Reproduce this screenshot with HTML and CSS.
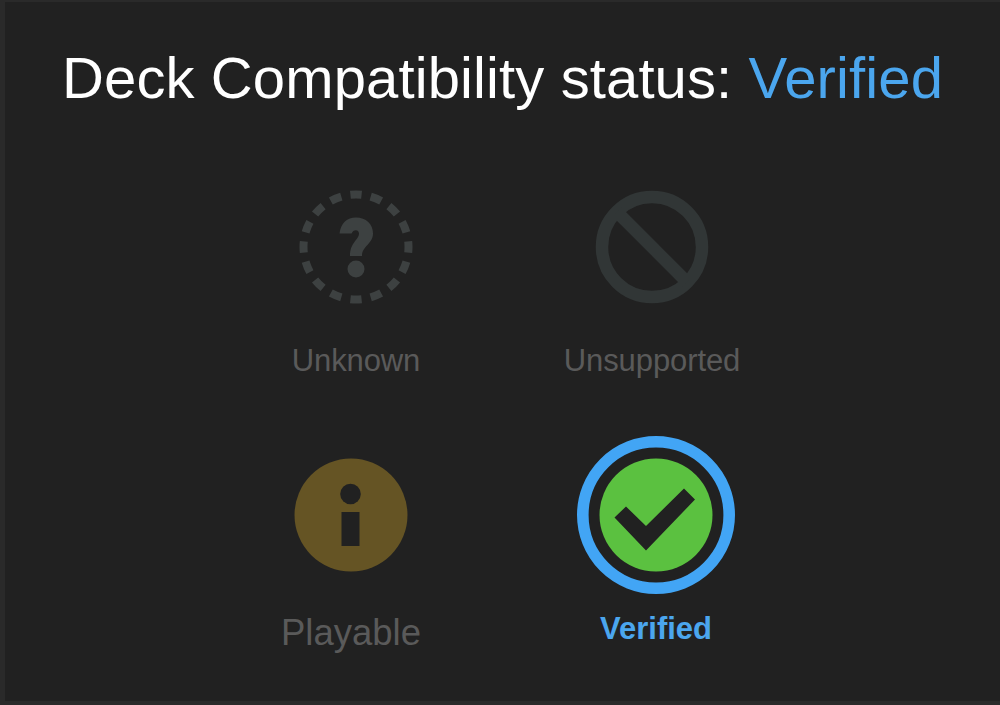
FILE: index.html
```
<!DOCTYPE html>
<html lang="en">
<head>
    <meta charset="UTF-8">
    <meta name="viewport" content="width=device-width, initial-scale=1.0">
    <title>Deck Compatibility</title>
    <link rel="stylesheet" href="styles.css">
</head>
<body>
    <div class="panel">
        <h1>Deck Compatibility status: <span class="current">Verified</span></h1>

        <div class="statuses">
            <div class="status unknown">
                <svg class="icon" width="114" height="114" viewBox="0 0 114 114">
                    <!-- 16 dashes, the first one centred on the right -->
                    <circle cx="57" cy="57" r="52.5" pathLength="320" fill="none" stroke="#3d4141" stroke-width="8" stroke-dasharray="11 9" stroke-dashoffset="5.5"/>
                    <path d="M40.500 43.500C42 33 48 27.500 57 27.500C67 27.500 74 34 74 43.500C74 54 63 56 63 66H51C51 52 60 50 60 43.500C60 39 54 39 52.500 43.500Z" fill="#3d4141"/>
                    <circle cx="57" cy="79" r="8.5" fill="#3d4141"/>
                </svg>
                <p>Unknown</p>
            </div>

            <div class="status unsupported">
                <svg class="icon" width="114" height="114" viewBox="0 0 114 114">
                    <circle cx="57" cy="57" r="50" fill="none" stroke="#313636" stroke-width="12.5"/>
                    <path d="M22 22L92 92" stroke="#313636" stroke-width="12.5"/>
                </svg>
                <p>Unsupported</p>
            </div>

            <div class="status playable">
                <svg class="icon" width="114" height="114" viewBox="0 0 114 114">
                    <circle cx="57" cy="57" r="56.5" fill="#655424"/>
                    <circle cx="56.5" cy="36" r="10.3" fill="#212121"/>
                    <path d="M47.5 54H65.5V88H47.5Z" fill="#212121"/>
                </svg>
                <p>Playable</p>
            </div>

            <div class="status verified">
                <svg class="icon" width="158" height="158" viewBox="0 0 158 158">
                    <circle cx="79" cy="79" r="73.2" fill="none" stroke="#42a5f5" stroke-width="11.6"/>
                    <circle cx="79" cy="79" r="56.5" fill="#5bc140"/>
                    <path d="M37.5 81.500L49 70.500L69 90L107 52.500L118 63.500L69 114.500Z" fill="#212121"/>
                </svg>
                <p>Verified</p>
            </div>
        </div>
    </div>
</body>
</html>
```
FILE: styles.css
```
* {
    margin: 0;
    padding: 0;
    box-sizing: border-box;
    font-family: "Liberation Sans", Arial, sans-serif;
}

body {
    background-color: #212121;
}

.panel {
    height: 705px;
    border: solid #2a2a2a;
    border-width: 2px 0 4px 5px;
    padding-top: 43px;
    overflow: hidden;
}

h1 {
    color: white;
    font-size: 58px;
    font-weight: normal;
    line-height: 66px;
    letter-spacing: 0.12px;
    padding-left: 57px;
    white-space: nowrap;
}

.current {
    color: #4ba6ee;
}

.statuses {
    display: grid;
    grid-template-columns: 300px 300px;
    grid-template-rows: 246px 230px;
    margin: 79px 0 0 199px;
}

.status {
    display: flex;
    flex-direction: column;
    align-items: center;
    color: #5a5a5a;
    font-size: 31px;
    line-height: 36px;
}

.icon {
    display: block;
    flex-shrink: 0;
}

.unknown {
    padding-left: 4px;
}

.unsupported {
    padding-right: 4px;
}

.unknown p,
.unsupported p {
    margin-top: 39px;
    letter-spacing: -0.1px;
}

.playable {
    padding: 22px 6px 0 0;
}

.playable p {
    font-size: 36.5px;
    line-height: 42px;
    margin-top: 40px;
}

.verified {
    padding-left: 4px;
}

.verified p {
    color: #4ba6ee;
    font-weight: bold;
    margin-top: 17px;
}
```
